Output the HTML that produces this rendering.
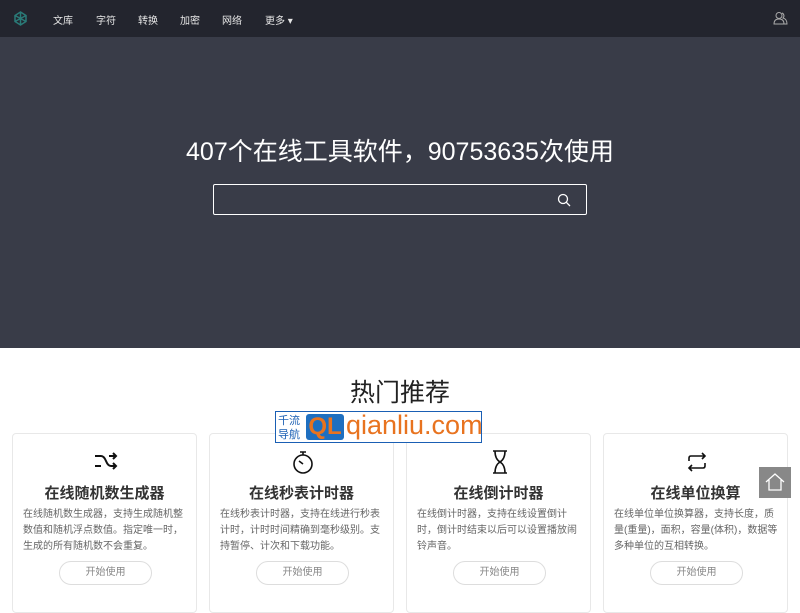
<!DOCTYPE html>
<html><head><meta charset="utf-8"><style>
*{margin:0;padding:0;box-sizing:border-box}
body{width:800px;height:599px;overflow:hidden;background:#fff;font-family:"Liberation Sans","Noto Sans CJK SC",sans-serif;position:relative}
.nav{height:37px;background:#23252e;position:relative}
.nav a{position:absolute;top:12px;color:#e6e6e6;font-size:10px}
.hero{position:absolute;top:37px;left:0;width:800px;height:311px;background:#393c48}
.hero h1{position:absolute;top:95px;width:800px;text-align:center;color:#fff;font-size:25px;font-weight:normal}
.search{position:absolute;left:213px;top:147px;width:374px;height:31px;border:1px solid #fff;border-radius:2px}
.title{position:absolute;top:373px;width:800px;text-align:center;font-size:25px;color:#222}
.card{position:absolute;top:433px;width:185px;height:180px;border:1px solid #e8e8e8;border-radius:4px;text-align:center}
.card h3{position:absolute;top:48px;width:100%;font-size:15px;font-weight:bold;color:#333}
.card p{position:absolute;top:73px;left:10px;right:8px;text-align:left;font-size:10px;line-height:16px;color:#666}
.card .btn{position:absolute;top:127px;left:46px;width:93px;height:24px;border:1px solid #ddd;border-radius:12px;font-size:10px;color:#888;line-height:22px}
.card svg{position:absolute;top:15px;left:80px}
</style></head><body>
<div class="nav">
<svg style="position:absolute;left:13px;top:11px" width="15" height="15" viewBox="0 0 15 15"><path d="M7.5 1L13 4.5V10.5L7.5 14L2 10.5V4.5Z M2 4.5L13 10.5 M13 4.5L2 10.5 M7.5 1V14" stroke="#2a7b78" stroke-width="1.5" fill="none"/></svg>
<a style="left:53px">文库</a><a style="left:96px">字符</a><a style="left:138px">转换</a><a style="left:180px">加密</a><a style="left:222px">网络</a><a style="left:265px">更多 ▾</a>
<svg style="position:absolute;left:773px;top:11px" width="15" height="14" viewBox="0 0 15 14"><circle cx="6" cy="4.5" r="3" stroke="#aaa" fill="none"/><path d="M1 13Q1 8 6 8Q11 8 11 13Z M9 2A3 3 0 0 1 10 7Q14 8 14 13H11" stroke="#aaa" fill="none"/></svg>
</div>
<div class="hero"><h1>407个在线工具软件，90753635次使用</h1>
<div class="search"><svg style="position:absolute;right:15px;top:8px" width="14" height="14" viewBox="0 0 14 14"><circle cx="6" cy="6" r="4.5" stroke="#fff" stroke-width="1.3" fill="none"/><path d="M9.3 9.3L13 13" stroke="#fff" stroke-width="1.3"/></svg></div></div>
<div class="title">热门推荐</div>
<div class="card" style="left:12px"><svg width="26" height="24" viewBox="0 0 26 24"><path d="M2 7H8Q11 7 13 12Q15 17 18 17H23 M2 17H8 M16 7H23 M20 4L23 7L20 10 M20 14L23 17L20 20" stroke="#111" stroke-width="2" fill="none"/></svg><h3>在线随机数生成器</h3><p>在线随机数生成器，支持生成随机整数值和随机浮点数值。指定唯一时，生成的所有随机数不会重复。</p><div class="btn">开始使用</div></div>
<div class="card" style="left:209px"><svg width="26" height="26" viewBox="0 0 26 26"><circle cx="13" cy="15" r="9" stroke="#111" stroke-width="1.6" fill="none"/><path d="M10 3H16 M13 3V6 M13 15L9 12" stroke="#111" stroke-width="1.6"/></svg><h3>在线秒表计时器</h3><p>在线秒表计时器，支持在线进行秒表计时，计时时间精确到毫秒级别。支持暂停、计次和下载功能。</p><div class="btn">开始使用</div></div>
<div class="card" style="left:406px"><svg width="26" height="26" viewBox="0 0 26 26"><path d="M6 2H20 M6 24H20 M8 2Q8 10 13 13Q18 10 18 2 M8 24Q8 16 13 13Q18 16 18 24" stroke="#111" stroke-width="1.6" fill="none"/></svg><h3>在线倒计时器</h3><p>在线倒计时器，支持在线设置倒计时，倒计时结束以后可以设置播放闹铃声音。</p><div class="btn">开始使用</div></div>
<div class="card" style="left:603px"><svg width="26" height="26" viewBox="0 0 26 26"><path d="M5 12V9Q5 7 7 7H21 M18 4L21 7L18 10 M21 14V17Q21 19 19 19H5 M8 16L5 19L8 22" stroke="#111" stroke-width="1.6" fill="none"/></svg><h3>在线单位换算</h3><p>在线单位单位换算器，支持长度，质量(重量)，面积，容量(体积)，数据等多种单位的互相转换。</p><div class="btn">开始使用</div></div>
<div style="position:absolute;left:275px;top:411px;width:207px;height:32px;border:1px solid #1a5fb4;background:#fff">
<div style="position:absolute;left:2px;top:2px;font-size:11px;line-height:14px;color:#1a5fb4">千流<br>导航</div>
<div style="position:absolute;left:30px;top:2px;width:38px;height:26px;background:#1e6fc0;border-radius:3px;color:#e8731f;font-weight:bold;font-size:24px;line-height:26px;text-align:center">QL</div>
<div style="position:absolute;left:70px;top:-2px;font-size:27px;color:#e8731f">qianliu.com</div></div>
<div style="position:absolute;left:759px;top:467px;width:32px;height:31px;background:#888"><svg width="32" height="31" viewBox="0 0 32 31"><path d="M7 15L16 7L25 15 M10 13V23H22V13" stroke="#fff" stroke-width="1.3" fill="none"/></svg></div>
</body></html>
